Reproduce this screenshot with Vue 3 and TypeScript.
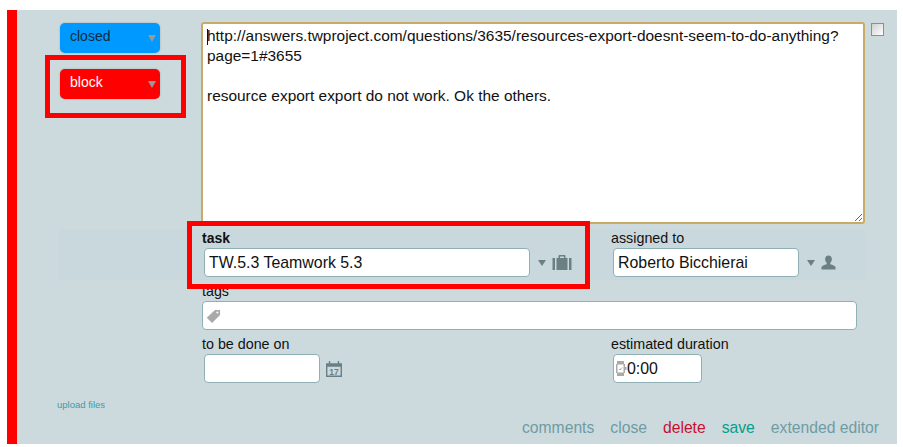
<script setup lang="ts">
const text = `http://answers.twproject.com/questions/3635/resources-export-doesnt-seem-to-do-anything?page=1#3655

resource export export do not work. Ok the others.`
const links = [
  { label: 'comments', cls: 'muted' },
  { label: 'close', cls: 'muted' },
  { label: 'delete', cls: 'danger' },
  { label: 'save', cls: 'ok' },
  { label: 'extended editor', cls: 'muted' },
]
</script>

<template>
  <div class="page">
    <div class="panel">
      <aside class="side">
        <div class="status blue"><span>closed</span><i class="caret"></i></div>
        <div class="status red"><span>block</span><i class="caret"></i></div>
        <a class="upload">upload files</a>
      </aside>

      <main class="main">
        <div class="editor-row">
          <textarea class="editor" :value="text" readonly></textarea>
          <i class="cursor"></i>
          <span class="check"></span>
        </div>

        <div class="two-col row-task">
          <div class="col-task">
            <label class="lbl strong">task</label>
            <div class="inline">
              <div class="box task-box">TW.5.3 Teamwork 5.3</div>
              <i class="drop"></i>
              <svg class="ico" width="20" height="15" viewBox="0 0 20 15">
                <path fill="#6a8085" d="M6.500 3V1.200C6.500.5 7 0 7.700 0h4.600c.7 0 1.200.5 1.200 1.200V3H12V1.500H8V3z"/>
                <rect x="4.500" y="3" width="11" height="12" fill="#6a8085"/>
                <rect x="0.500" y="3" width="2.500" height="12" fill="#6a8085"/>
                <rect x="17" y="3" width="2.500" height="12" fill="#6a8085"/>
              </svg>
            </div>
          </div>
          <div>
            <label class="lbl">assigned to</label>
            <div class="inline">
              <div class="box person-box">Roberto Bicchierai</div>
              <i class="drop"></i>
              <svg class="ico" width="15" height="15" viewBox="0 0 16 15">
                <path fill="#6a8085" d="M8 0c2.300 0 3.600 1.600 3.600 3.800 0 1.700-.7 3.200-1.700 4.100v1.400c2.600.7 5.200 1.700 5.600 3V15H.5v-2.700c.4-1.300 3-2.300 5.600-3V7.900C5.100 7 4.400 5.500 4.400 3.800 4.400 1.600 5.700 0 8 0z"/>
              </svg>
            </div>
          </div>
        </div>

        <div class="tags">
          <label class="lbl">tags</label>
          <div class="box tags-box">
            <svg width="15" height="15" viewBox="0 0 16 15">
              <path fill="#a9a9a9" d="M9.500.5h5.500v5.500L6.500 14.500.8 8.800z"/>
              <circle cx="12.200" cy="3.300" r="1.100" fill="#fff"/>
            </svg>
          </div>
        </div>

        <div class="two-col row-date">
          <div>
            <label class="lbl">to be done on</label>
            <div class="inline">
              <div class="box date-box"></div>
              <svg class="cal" width="16" height="16" viewBox="0 0 17 17">
                <path fill="#6a8085" d="M0 2.500h3V0h1.500v2.500h8V0H14v2.500h3V17H0zM1.500 6v9.500h14V6z"/>
                <text x="8.500" y="14.800" text-anchor="middle" class="cal-num">17</text>
              </svg>
            </div>
          </div>
          <div>
            <label class="lbl">estimated duration</label>
            <div class="inline">
              <div class="box dur-box">
                <svg width="11" height="15" viewBox="0 0 11 15">
                  <path fill="#a9a9a9" d="M1 0h7v3h1v3h1.500v3H9v3H8v3H1v-3H0V3h1z"/>
                  <rect x="1.500" y="3.500" width="6" height="8" fill="#fff"/>
                  <path d="M3 8l1 1 2-2.500" stroke="#a9a9a9" fill="none"/>
                </svg>
                <span>0:00</span>
              </div>
            </div>
          </div>
        </div>

        <nav class="actions">
          <a v-for="l in links" :key="l.label" :class="l.cls">{{ l.label }}</a>
        </nav>
      </main>

      <div class="mark mark-block"></div>
      <div class="mark mark-task"></div>
    </div>
  </div>
</template>

<style scoped>
.page {
  width: 903px;
  height: 447px;
  box-sizing: border-box;
  padding: 10px 6px 3px 7px;
  background: #fff;
  font-family: "Liberation Sans", Arial, sans-serif;
  color: #111;
  overflow: hidden;
}
.panel {
  position: relative;
  display: flex;
  height: 100%;
  box-sizing: border-box;
  background: #ccdade;
  border-left: 10px solid #ff0000;
}
.side {
  position: relative;
  width: 184px;
  flex: none;
  box-sizing: border-box;
  padding: 13px 0 0 43px;
  display: flex;
  flex-direction: column;
  gap: 16px;
}
.status {
  width: 100px;
  height: 30px;
  box-sizing: border-box;
  padding-left: 10px;
  border-radius: 5px;
  font-size: 14px;
  line-height: 26px;
  position: relative;
  box-shadow: 0 0 2px rgba(0, 0, 0, 0.25);
}
.blue { background: #0099ff; color: #102a40; }
.red { background: #ff0000; color: #fff; }
.caret {
  position: absolute;
  right: 4px;
  top: 12px;
  width: 0;
  height: 0;
  border-left: 4px solid transparent;
  border-right: 4px solid transparent;
  border-top: 7px solid #999;
}
.upload {
  margin-top: 284px;
  margin-left: -3px;
  font-size: 9.500px;
  color: #3d9aa8;
}
.main {
  flex: 1;
  min-width: 0;
  padding-top: 12px;
}
.editor-row {
  position: relative;
  display: flex;
  align-items: flex-start;
  gap: 6px;
}
.editor {
  display: block;
  width: 664px;
  height: 202px;
  box-sizing: border-box;
  margin: 0;
  border: 2px solid #c9ab68;
  border-radius: 3px;
  background: #fff;
  padding: 2px 4px;
  font: 15.450px/20px "Liberation Sans", Arial, sans-serif;
  color: #111;
  resize: both;
  outline: none;
}
.cursor {
  position: absolute;
  left: 6px;
  top: 7px;
  width: 1px;
  height: 16px;
  background: #111;
}
.check {
  width: 13px;
  height: 13px;
  margin-top: 1px;
  box-sizing: border-box;
  border: 1px solid #8d8d8d;
  background: linear-gradient(135deg, #cfcfcf, #fff);
}
.two-col {
  display: grid;
  grid-template-columns: 409px 1fr;
  margin-left: 1px;
}
.row-task { position: relative; margin-top: 6px; }
.row-task::before {
  content: "";
  position: absolute;
  left: -143px;
  right: 32px;
  top: -1px;
  height: 51px;
  background: #c9d8dc;
}
.row-task > * { position: relative; }
.row-date { margin-top: 6px; }
.lbl {
  display: block;
  font-size: 14.300px;
  line-height: 16px;
  margin-bottom: 2px;
  color: #111;
}
.strong { font-weight: 700; font-size: 14px; }
.inline {
  display: flex;
  align-items: center;
  padding-left: 2px;
}
.box {
  box-sizing: border-box;
  height: 29px;
  background: #fff;
  border: 1px solid #8fb0b5;
  border-radius: 4px;
  font-size: 15.900px;
  line-height: 27px;
  padding-left: 4px;
}
.task-box { width: 326px; }
.person-box { width: 186px; }
.drop {
  width: 0;
  height: 0;
  margin: 0 6px 0 8px;
  border-left: 4px solid transparent;
  border-right: 4px solid transparent;
  border-top: 6px solid #6a8085;
}
.tags { margin-top: 8px; margin-left: 1px; }
.tags .lbl { line-height: 13px; }
.tags-box {
  width: 655px;
  margin-top: 3px;
  padding: 7px 0 0 3px;
}
.tags-box svg { display: block; }
.date-box { width: 116px; }
.cal { margin-left: 6px; margin-top: 1px; }
.cal-num { font: 700 9px "Liberation Sans", Arial, sans-serif; fill: #6a8085; }
.dur-box {
  width: 89px;
  display: flex;
  align-items: center;
  padding-left: 2px;
}
.actions {
  margin-top: 36px;
  display: flex;
  justify-content: flex-end;
  gap: 16px;
  padding-right: 18px;
  font-size: 15.700px;
  line-height: 18px;
}
.muted { color: #6f9ca3; }
.danger { color: #c8102e; }
.ok { color: #00a08a; }
.mark {
  position: absolute;
  box-sizing: border-box;
  border: 5px solid #ff0000;
}
.mark-block { left: 28px; top: 45px; width: 141px; height: 63px; }
.mark-task { left: 170px; top: 211px; width: 403px; height: 68px; }
</style>
